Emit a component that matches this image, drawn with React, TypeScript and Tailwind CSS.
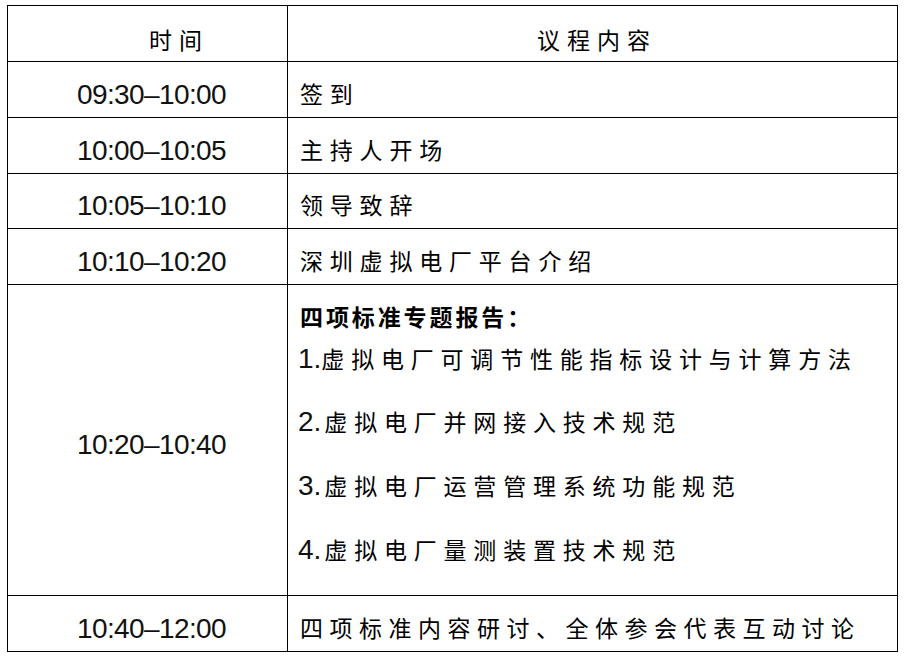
const FONT = "font-['Liberation_Sans','Noto_Sans_CJK_SC',sans-serif]";

type Row = { time: string; text: string; height: string };

const rows: Row[] = [
  { time: "09:30–10:00", text: "签到", height: "h-[56px]" },
  { time: "10:00–10:05", text: "主持人开场", height: "h-[56px]" },
  { time: "10:05–10:10", text: "领导致辞", height: "h-[55px]" },
  { time: "10:10–10:20", text: "深圳虚拟电厂平台介绍", height: "h-[56px]" },
];

const reports = [
  { n: "1.", text: "虚拟电厂可调节性能指标设计与计算方法", gap: "mt-[9px]", pad: "" },
  { n: "2.", text: "虚拟电厂并网接入技术规范", gap: "mt-[31px]", pad: "mr-[3px]" },
  { n: "3.", text: "虚拟电厂运营管理系统功能规范", gap: "mt-[32px]", pad: "mr-[3px]" },
  { n: "4.", text: "虚拟电厂量测装置技术规范", gap: "mt-[32px]", pad: "mr-[3px]" },
];

function TimeCell({ time }: { time: string }) {
  return (
    <div className="flex w-[280px] shrink-0 items-center justify-center border-r border-black pt-[10px] pl-[8px]">
      <span className="text-[28px] leading-[32px] tracking-[-0.6px] text-[#111]">{time}</span>
    </div>
  );
}

export default function App() {
  return (
    <div className={`min-h-[659px] bg-white pt-[5px] pl-[7px] ${FONT}`}>
      <div className="w-[891px] border-t border-r border-l border-black text-black">
        {/* header */}
        <div className="flex h-[56px] border-b border-black">
          <div className="flex w-[280px] shrink-0 items-center border-r border-black pt-[14px] pl-[141px]">
            <span className="text-[23px] leading-[32px] tracking-[7px]">时间</span>
          </div>
          <div className="flex flex-1 items-center pt-[14px] pl-[249px]">
            <span className="text-[23px] leading-[32px] tracking-[7px]">议程内容</span>
          </div>
        </div>

        {rows.map((r) => (
          <div key={r.time} className={`flex ${r.height} border-b border-black`}>
            <TimeCell time={r.time} />
            <div className="flex flex-1 items-center pt-[10px] pl-[12px]">
              <span className="text-[23px] leading-[32px] tracking-[6.8px]">{r.text}</span>
            </div>
          </div>
        ))}

        {/* four standards */}
        <div className="flex h-[311px] border-b border-black">
          <TimeCell time="10:20–10:40" />
          <div className="flex flex-1 flex-col pt-[17px] pl-[12px]">
            <div className="h-[32px] text-[23px] leading-[32px] font-bold tracking-[2.9px]">四项标准专题报告：</div>
            {reports.map((r) => (
              <div key={r.n} className={`flex h-[32px] items-baseline leading-[32px] ${r.gap}`}>
                <span className={`-ml-[2px] text-[28px] leading-[32px] text-[#111] ${r.pad}`}>{r.n}</span>
                <span className="text-[23px] leading-[32px] tracking-[6.8px]">{r.text}</span>
              </div>
            ))}
          </div>
        </div>

        <div className="flex h-[56px] border-b border-black">
          <TimeCell time="10:40–12:00" />
          <div className="flex flex-1 items-center pt-[10px] pl-[12px]">
            <span className="text-[23px] leading-[32px] tracking-[6.5px]">四项标准内容研讨、全体参会代表互动讨论</span>
          </div>
        </div>
      </div>
    </div>
  );
}
